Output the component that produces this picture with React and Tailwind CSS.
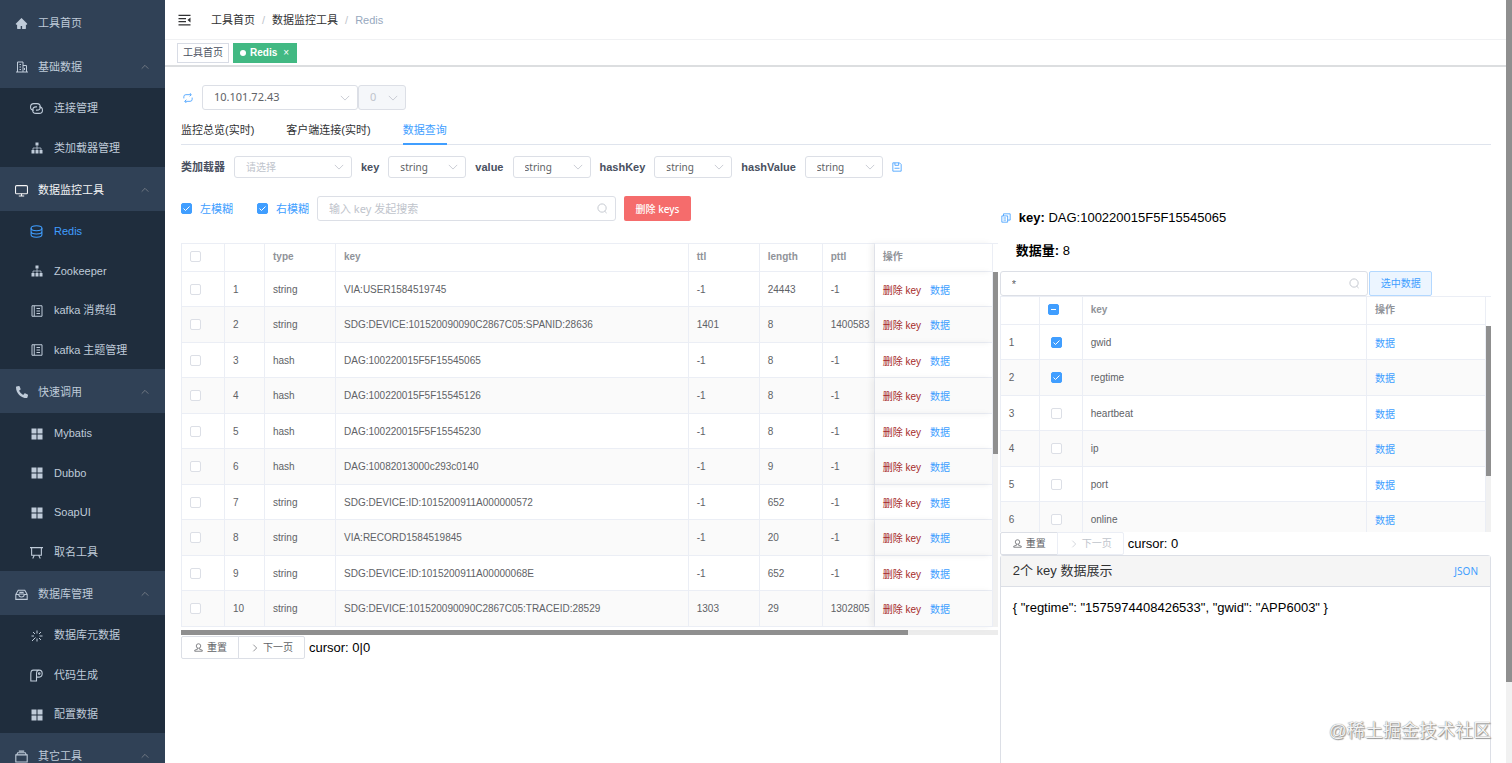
import React from 'react';
import { FaPhoneAlt } from 'react-icons/fa';
import { AiFillHome } from 'react-icons/ai';

const Svg = ({ children, className = 'size-3' }) => (
  <svg
    viewBox="0 0 24 24"
    fill="none"
    stroke="currentColor"
    strokeWidth="2"
    className={`${className} shrink-0`}
    aria-hidden="true"
  >
    {children}
  </svg>
);

const OfficeIcon = () => (
  <Svg>
    <path d="M3 22V2h11v20M14 9h7v13M0 22h24M7 7h3M7 12h3M7 17h3M17 14v4" />
  </Svg>
);

const LinkIcon = () => (
  <Svg className="size-[13px]">
    <path d="M7 15a6 6 0 0 1 0-12h6a6 6 0 0 1 0 12h-2" />
    <path d="M17 9a6 6 0 0 1 0 12h-6a6 6 0 0 1 0-12h2" />
  </Svg>
);

const MonitorIcon = () => (
  <Svg className="size-[13px]">
    <rect x="1" y="3" width="22" height="15" rx="2" />
    <path d="M12 18v4M7 22h10" />
  </Svg>
);

const CoinIcon = () => (
  <Svg className="size-[13px]">
    <ellipse cx="12" cy="6" rx="10" ry="4.500" />
    <path d="M2 6v6c0 2.500 4.500 4.500 10 4.500s10-2 10-4.500V6M2 12v6c0 2.500 4.500 4.500 10 4.500s10-2 10-4.500v-6" />
  </Svg>
);

const NotebookIcon = () => (
  <Svg>
    <path d="M2 1.500h20v21H2zM6.500 1.500v21M11 7h7M11 12h7M11 17h7" />
  </Svg>
);

const GridIcon = () => (
  <Svg>
    <path fill="currentColor" stroke="none" d="M1 1h10v10H1zM13 1h10v10H13zM1 13h10v10H1zM13 13h10v10H13z" />
  </Svg>
);

const SitemapIcon = () => (
  <Svg>
    <path fill="currentColor" stroke="none" d="M9 1h6v6H9zM1 16h6v7H1zM9 16h6v7H9zM17 16h6v7h-6z" />
    <path d="M12 7v10M4 17v-5h16v5" strokeWidth="1.500" />
  </Svg>
);

const BoardIcon = () => (
  <Svg className="size-[13px]">
    <path d="M0 3h24M3 3v14h18V3M8 17l-3 6M16 17l3 6" />
  </Svg>
);

const InboxIcon = () => (
  <Svg className="size-[13px]">
    <path d="M1.500 12 6 4h12l4.500 8v9h-21zM1.500 12H7c0 6 10 6 10 0h5.500M8 8h8M7 11h10" />
  </Svg>
);

const SparkIcon = () => (
  <Svg>
    <path d="M12 1v6M12 17v6M17 12h6M2 22l7-7M4 4l4 4M20 4l-4 4M16 16l4 4M1 12h5" />
  </Svg>
);

const PaperIcon = () => (
  <Svg className="size-[13px]">
    <path d="M16 2H6C3 2 1.500 5 1.500 9v13H12V9c0-4 1.500-7 5-7s5.500 2.500 5.500 6.500S20 15 17 15h-5" />
    <circle cx="17" cy="8.500" r="1.500" />
  </Svg>
);

const BoxIcon = () => (
  <Svg className="size-[13px]">
    <path d="M1.500 9h21v13h-21zM3 9l2-4h14l2 4M7 2h10" />
  </Svg>
);

const Chevron = ({ className }) => (
  <Svg className={className}>
    <path d="m2 7 10 10L22 7" />
  </Svg>
);

const SearchIcon = () => (
  <Svg className="size-[11px]">
    <circle cx="11" cy="11" r="9" />
    <path d="m17 18 4 4" />
  </Svg>
);

const RefreshIcon = () => (
  <Svg className="size-[10px]">
    <path d="M2 13V9a5 5 0 0 1 5-5h12M22 11v4a5 5 0 0 1-5 5H5M16 0l4 4-4 4M8 16l-4 4 4 4" />
  </Svg>
);

const SaveIcon = () => (
  <Svg className="size-[10px]">
    <path d="M2 2h16l4 4v16H2zM7 2v6h9V2M6 15h12" />
  </Svg>
);

const CopyIcon = () => (
  <Svg className="size-[10px]">
    <path d="M2 7h14v15H2zM6 7V2h16v15h-6M6 12h6M6 17h6" />
  </Svg>
);

const UserIcon = () => (
  <Svg className="size-[9px]">
    <circle cx="12" cy="8" r="6" />
    <path d="M9 14v3l-7 2v3h20v-3l-7-2v-3" />
  </Svg>
);

const FoldIcon = () => (
  <Svg className="h-3 w-[13px]">
    <path d="M0 2.500h24M0 9h15M0 15h15M0 21.500h24" strokeWidth="2.500" />
    <path d="m24 7-6 5 6 5z" fill="currentColor" stroke="none" />
  </Svg>
);

const menu = [
  {
    title: '基础数据',
    icon: OfficeIcon,
    items: [
      { name: '连接管理', icon: LinkIcon },
      { name: '类加载器管理', icon: SitemapIcon },
    ],
  },
  {
    title: '数据监控工具',
    icon: MonitorIcon,
    current: true,
    items: [
      { name: 'Redis', icon: CoinIcon, active: true },
      { name: 'Zookeeper', icon: SitemapIcon },
      { name: 'kafka 消费组', icon: NotebookIcon },
      { name: 'kafka 主题管理', icon: NotebookIcon },
    ],
  },
  {
    title: '快速调用',
    icon: () => <FaPhoneAlt className="size-3 shrink-0" />,
    items: [
      { name: 'Mybatis', icon: GridIcon },
      { name: 'Dubbo', icon: GridIcon },
      { name: 'SoapUI', icon: GridIcon },
      { name: '取名工具', icon: BoardIcon },
    ],
  },
  {
    title: '数据库管理',
    icon: InboxIcon,
    items: [
      { name: '数据库元数据', icon: SparkIcon },
      { name: '代码生成', icon: PaperIcon },
      { name: '配置数据', icon: GridIcon },
    ],
  },
  { title: '其它工具', icon: BoxIcon, items: [] },
];

const keys = [
  ['string', 'VIA:USER1584519745', '-1', '24443', '-1'],
  ['string', 'SDG:DEVICE:101520090090C2867C05:SPANID:28636', '1401', '8', '1400583'],
  ['hash', 'DAG:100220015F5F15545065', '-1', '8', '-1'],
  ['hash', 'DAG:100220015F5F15545126', '-1', '8', '-1'],
  ['hash', 'DAG:100220015F5F15545230', '-1', '8', '-1'],
  ['hash', 'DAG:10082013000c293c0140', '-1', '9', '-1'],
  ['string', 'SDG:DEVICE:ID:1015200911A000000572', '-1', '652', '-1'],
  ['string', 'VIA:RECORD1584519845', '-1', '20', '-1'],
  ['string', 'SDG:DEVICE:ID:1015200911A00000068E', '-1', '652', '-1'],
  ['string', 'SDG:DEVICE:101520090090C2867C05:TRACEID:28529', '1303', '29', '1302805'],
];

const fields = ['gwid', 'regtime', 'heartbeat', 'ip', 'port', 'online'];

const IconSlot = ({ children }) => (
  <span className="flex w-[13px] shrink-0 justify-center">{children}</span>
);

function Sidebar() {
  return (
    <nav className="w-[165px] shrink-0 bg-[#304156] text-[11px] text-[#bfcbd9]">
      <a href="#home" className="flex h-11 items-center gap-2.5 pl-[15px] pt-0.5">
        <IconSlot><AiFillHome className="size-[13px]" /></IconSlot>
        工具首页
      </a>
      {menu.map(({ title, icon: Icon, current, items }) => (
        <div key={title}>
          <button
            type="button"
            className={`flex h-11 w-full items-center gap-2.5 pl-[15px] pr-4 pt-0.5 text-left ${current ? 'text-[#f4f4f5]' : ''}`}
          >
            <IconSlot><Icon /></IconSlot>
            <span className="flex-1">{title}</span>
            <Chevron className="size-2 rotate-180 text-[#909399]" />
          </button>
          <ul className="bg-[#1f2d3d]">
            {items.map(({ name, icon: ItemIcon, active }) => (
              <li key={name} className="h-[39px] even:h-10">
                <a
                  href={`#${name}`}
                  className={`flex h-full items-center gap-[11px] pl-[30px] pt-0.5 ${active ? 'text-[#409eff]' : ''}`}
                >
                  <IconSlot><ItemIcon /></IconSlot>
                  {name}
                </a>
              </li>
            ))}
          </ul>
        </div>
      ))}
    </nav>
  );
}

function Header() {
  return (
    <header>
      <div className="flex h-10 items-center border-b border-[#f0f1f3] pl-[13px] text-[11px] text-[#303133]">
        <button type="button" aria-label="折叠菜单">
          <FoldIcon />
        </button>
        <ol className="ml-5 flex gap-[7px] pt-0.5">
          <li><a href="#home">工具首页</a></li>
          <li className="text-[#c0c4cc]">/</li>
          <li><a href="#monitor">数据监控工具</a></li>
          <li className="text-[#c0c4cc]">/</li>
          <li className="text-[#97a8be]">Redis</li>
        </ol>
      </div>
      <div className="flex h-[27px] items-center gap-1 border-b-2 border-[#dcdee0] pl-3 text-[10px]">
        <a href="#home" className="flex h-5 items-center border border-[#d8dce5] px-[5px] text-[#495060]">
          工具首页
        </a>
        <a href="#redis" className="flex h-5 w-16 items-center bg-[#42b983] px-[7px] font-bold text-white">
          <span className="mr-1 size-1.5 rounded-full bg-white" />
          Redis
          <span className="ml-1.5 font-normal leading-none">×</span>
        </a>
      </div>
    </header>
  );
}

function Select({ label, value, disabled, placeholder, className }) {
  return (
    <span className={`relative block ${className}`}>
      <select
        aria-label={label}
        disabled={disabled}
        defaultValue={value}
        className={`h-full w-full appearance-none rounded-[3px] border border-[#dcdfe6] pl-[11px] font-['Noto_Sans','Noto_Sans_CJK_SC',sans-serif] disabled:opacity-100 ${
          disabled ? 'bg-[#f5f7fa] text-[#c0c4cc]' : placeholder ? 'bg-white text-[#c0c4cc]' : 'bg-white text-[#606266]'
        }`}
      >
        <option>{value}</option>
      </select>
      <span className="pointer-events-none absolute inset-y-0 right-2 flex items-center text-[#c0c4cc]">
        <Chevron className="size-[10px]" />
      </span>
    </span>
  );
}

function Checkbox({ id, label, checked, partial }) {
  const on = checked || partial;
  return (
    <span className="relative block size-[11px] shrink-0">
      <input
        id={id}
        type="checkbox"
        aria-label={label}
        defaultChecked={checked}
        className={`block size-[11px] appearance-none rounded-[2px] border ${
          on ? 'border-[#409eff] bg-[#409eff]' : 'border-[#dcdfe6] bg-white'
        }`}
      />
      {on && (
        <svg
          viewBox="0 0 11 11"
          className="pointer-events-none absolute inset-0 size-full"
          fill="none"
          stroke="white"
          aria-hidden="true"
        >
          <path d={partial ? 'M3 5.500h5' : 'M2.500 5.500 4.500 7.500 8.500 3.500'} />
        </svg>
      )}
    </span>
  );
}

const typeSelects = ['key', 'value', 'hashKey', 'hashValue'];

function Toolbar() {
  return (
    <>
      <div className="flex h-[25px] items-center pl-0.5 text-[11px]">
        <button type="button" aria-label="刷新" className="mr-[9px] text-[#409eff]">
          <RefreshIcon />
        </button>
        <Select label="主机" value="10.101.72.43" className="h-full w-[156px]" />
        <Select label="库" value="0" disabled className="h-full w-12" />
      </div>
      <div role="tablist" className="mt-1 flex h-[31px] gap-8 border-b border-[#dfe4ed] text-[11px] text-[#303133]">
        <button type="button" role="tab" className="h-[31px] pt-0.5">监控总览(实时)</button>
        <button type="button" role="tab" className="h-[31px] pt-0.5">客户端连接(实时)</button>
        <button type="button" role="tab" aria-selected="true" className="h-[31px] border-b-2 border-[#409eff] pt-1 text-[#409eff]">
          数据查询
        </button>
      </div>
      <div className="mt-[11px] flex h-[22px] items-center gap-[9px] text-[11px] font-bold text-[#495060]">
        类加载器
        <Select label="类加载器" value="请选择" placeholder className="h-full w-[118px] text-[10px] font-normal" />
        {typeSelects.map((name) => (
          <React.Fragment key={name}>
            {name}
            <Select label={name} value="string" className="h-full w-[78px] text-[10px] font-normal" />
          </React.Fragment>
        ))}
        <button type="button" aria-label="保存" className="text-[#409eff]">
          <SaveIcon />
        </button>
      </div>
    </>
  );
}

const th = 'h-[29px] border-t border-r border-b border-[#ebeef5] px-2 pb-0.5 text-left font-bold text-[#909399]';
const td = 'border-r border-b border-[#ebeef5] px-2';
const row = 'h-[35px] even:h-9 even:bg-[#fafafa]';
const fixedShadow = 'shadow-[-4px_0_6px_rgba(0,0,0,0.06)]';
const table = 'w-full min-w-0 flex-1 table-fixed border-separate border-spacing-0 self-start border-l border-[#ebeef5] text-[10px] text-[#606266]';

function KeyTable() {
  return (
    <div className="mt-[22px]">
      <div className="flex">
        <table className={table}>
          <colgroup>
            <col className="w-[43px]" />
            <col className="w-10" />
            <col className="w-[71px]" />
            <col />
            <col className="w-[71px]" />
            <col className="w-[63px]" />
            <col className="w-[52px]" />
            <col className="w-[118px]" />
          </colgroup>
          <thead>
            <tr>
              <th className={th}><Checkbox label="全选" /></th>
              <th className={th} />
              <th className={th}>type</th>
              <th className={th}>key</th>
              <th className={th}>ttl</th>
              <th className={th}>length</th>
              <th className={th}>pttl</th>
              <th className={`${th} ${fixedShadow}`}>操作</th>
            </tr>
          </thead>
          <tbody>
            {keys.map((cells, i) => (
              <tr key={cells[1]} className={row}>
                <td className={td}><Checkbox label={cells[1]} /></td>
                <td className={td}>{i + 1}</td>
                {cells.map((cell, n) => (
                  <td key={n} className={`${td} whitespace-nowrap`}>{cell}</td>
                ))}
                <td className={`${td} ${fixedShadow} whitespace-nowrap pt-0.5`}>
                  <button type="button" className="mr-[9px] text-[#a52a2a]">删除 key</button>
                  <button type="button" className="text-[#409eff]">数据</button>
                </td>
              </tr>
            ))}
          </tbody>
        </table>
        <div className="w-[5px] shrink-0 bg-[#f1f1f1]">
          <div className="h-[29px] border-t border-[#ebeef5] bg-white" />
          <div className="h-[182px] bg-[#8f8f8f]" />
        </div>
      </div>
      <div className="mt-[3px] h-[5px] bg-[#ececec]">
        <div className="h-full w-[89%] bg-[#8f8f8f]" />
      </div>
    </div>
  );
}

function Pager({ cursor, last }) {
  const button = 'flex h-[23px] items-center gap-1 border pl-3 pr-[11px] text-[10px]';
  return (
    <div className="flex items-center">
      <button type="button" className={`${button} rounded-l-[2px] border-[#dcdfe6] text-[#606266]`}>
        <UserIcon />
        重置
      </button>
      <button
        type="button"
        disabled={last}
        className={`${button} -ml-px rounded-r-[2px] ${last ? 'border-[#ebeef5] text-[#c0c4cc]' : 'border-[#dcdfe6] text-[#606266]'}`}
      >
        <Chevron className="size-2 -rotate-90" />
        下一页
      </button>
      <span className="ml-1 text-[13px] leading-5">cursor: {cursor}</span>
    </div>
  );
}

function KeyPanel() {
  return (
    <section className="min-w-0 pr-0.5">
      <div className="flex h-[25px] items-center text-[11px]">
        <Checkbox id="left" checked />
        <label htmlFor="left" className="ml-2 mr-6 pt-0.5 text-[#409eff]">左模糊</label>
        <Checkbox id="right" checked />
        <label htmlFor="right" className="ml-2 mr-2 pt-0.5 text-[#409eff]">右模糊</label>
        <span className="relative block h-full w-[299px]">
          <input
            type="text"
            aria-label="搜索"
            placeholder="输入 key 发起搜索"
            className="h-full w-full rounded-[3px] border border-[#dcdfe6] px-[11px] font-['Noto_Sans','Noto_Sans_CJK_SC',sans-serif] placeholder:text-[#c0c4cc]"
          />
          <span className="pointer-events-none absolute inset-y-0 right-2 flex items-center text-[#c0c4cc]">
            <SearchIcon />
          </span>
        </span>
        <button
          type="button"
          className="ml-2 h-full w-[67px] rounded-[2px] bg-[#f56c6c] pt-0.5 font-['Noto_Sans','Noto_Sans_CJK_SC',sans-serif] text-[10px] font-medium text-white"
        >
          删除 keys
        </button>
      </div>
      <KeyTable />
      <div className="mt-px">
        <Pager cursor="0|0" />
      </div>
    </section>
  );
}

function DataPanel() {
  return (
    <section className="min-w-0 text-[13px] text-black">
      <div className="mt-2.5 flex h-6 items-center gap-2 pl-px">
        <button type="button" aria-label="复制" className="text-[#409eff]">
          <CopyIcon />
        </button>
        <p><b>key:</b> DAG:100220015F5F15545065</p>
      </div>
      <p className="mt-2 pl-4 leading-[26px]"><b>数据量:</b> 8</p>
      <div className="mt-[7px] flex h-[25px] gap-px">
        <span className="relative block h-full w-3/4">
          <input
            type="text"
            aria-label="过滤"
            defaultValue="*"
            className="h-full w-full rounded-[3px] border border-[#dcdfe6] px-[11px] text-[11px] text-[#606266]"
          />
          <span className="pointer-events-none absolute inset-y-0 right-2 flex items-center text-[#c0c4cc]">
            <SearchIcon />
          </span>
        </span>
        <button type="button" className="w-[63px] rounded-[2px] border border-[#b3d8ff] bg-[#ecf5ff] text-[10px] text-[#409eff]">
          选中数据
        </button>
      </div>
      <div className="flex h-[236px] overflow-hidden">
        <table className={table}>
          <colgroup>
            <col className="w-[39px]" />
            <col className="w-[43px]" />
            <col />
            <col className="w-[119px]" />
          </colgroup>
          <thead>
            <tr>
              <th className={th} />
              <th className={th}><Checkbox label="全选" partial /></th>
              <th className={th}>key</th>
              <th className={th}>操作</th>
            </tr>
          </thead>
          <tbody>
            {fields.map((field, i) => (
              <tr key={field} className={row}>
                <td className={td}>{i + 1}</td>
                <td className={`${td} pl-[11px]`}><Checkbox label={field} checked={i < 2} /></td>
                <td className={td}>{field}</td>
                <td className={`${td} pt-0.5`}>
                  <button type="button" className="text-[#409eff]">数据</button>
                </td>
              </tr>
            ))}
          </tbody>
        </table>
        <div className="w-[5px] shrink-0 bg-[#f1f1f1]">
          <div className="h-[30px] border-t border-[#ebeef5] bg-white" />
          <div className="h-[150px] bg-[#8f8f8f]" />
        </div>
      </div>
      <Pager cursor="0" last />
      <div className="h-[300px] rounded-t-[3px] border border-[#dcdfe6]">
        <div className="flex h-[31px] items-center justify-between border-b border-[#dcdfe6] bg-[#f5f5f5] px-3 text-[#303133]">
          <h2>2个 key 数据展示</h2>
          <button type="button" className="font-['Noto_Sans',sans-serif] text-[10px] text-[#409eff]">JSON</button>
        </div>
        <pre className="px-3 pt-[11px] font-['Liberation_Sans',sans-serif] leading-5">
          {'{ "regtime": "1575974408426533", "gwid": "APP6003" }'}
        </pre>
      </div>
    </section>
  );
}

export default function App() {
  return (
    <div className="relative flex h-screen overflow-hidden bg-white font-['Liberation_Sans','Noto_Sans_CJK_SC',sans-serif]">
      <Sidebar />
      <main className="min-w-0 flex-1">
        <Header />
        <div className="pl-4 pr-[15px] pt-[18px]">
          <Toolbar />
          <div className="mt-[18px] grid grid-cols-[5fr_3fr]">
            <KeyPanel />
            <DataPanel />
          </div>
        </div>
      </main>
      <div className="w-1.5 shrink-0 bg-[#f1f1f1]">
        <div className="h-[682px] bg-[#8f8f8f]" />
      </div>
      <p className="pointer-events-none absolute bottom-[18px] right-[21px] text-lg text-[#f4f4f4] [text-shadow:0_0_1px_#666,1px_1px_1px_#999]">
        @稀土掘金技术社区
      </p>
    </div>
  );
}
